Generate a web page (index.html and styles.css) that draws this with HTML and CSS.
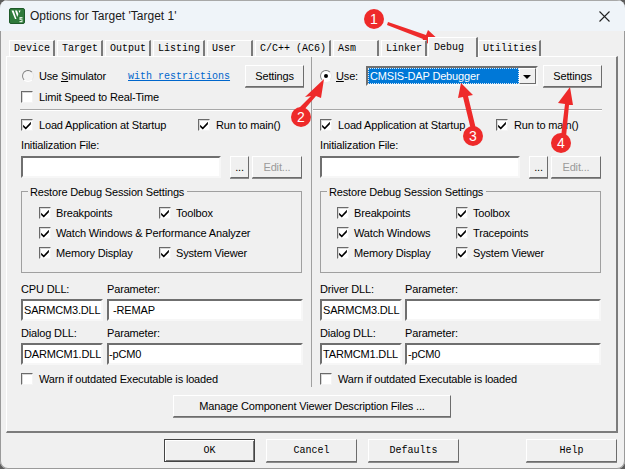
FILE: index.html
```html
<!DOCTYPE html>
<html lang="en">
<head>
<meta charset="utf-8">
<title>Options for Target 'Target 1'</title>
<link rel="stylesheet" href="styles.css">
</head>
<body>
<div class="window">
  <header class="titlebar">
    <svg class="appicon" width="16" height="16" viewBox="0 0 16 16">
      <rect x="0.5" y="0.5" width="15" height="15" rx="1.5" fill="#2f7a3b" stroke="#1e5a2a"/>
      <path d="M2.5 2.5 L6 11 L7.5 11 L4.6 2.5Z M6 2.5 L8.3 9 L9.4 6 L8 2.5Z M9.6 2.5 L10.4 5 L11.6 2.5Z" fill="#fff"/>
      <path d="M10.5 9h3v1.4h-2v.8h2v3h-3v-1.3h2v-.8h-2z" fill="#dfeee0"/>
    </svg>
    <span class="wintitle">Options for Target 'Target 1'</span>
    <svg class="closex" width="11" height="11" viewBox="0 0 11 11"><path d="M.5.5l10 10M10.5.5l-10 10" stroke="#222" stroke-width="1.1" fill="none"/></svg>
  </header>

  <nav class="tabs">
    <span class="tab w46">Device</span>
    <span class="tab w46">Target</span>
    <span class="tab w46">Output</span>
    <span class="tab w52">Listing</span>
    <span class="tab w46">User</span>
    <span class="tab w76">C/C++ (AC6)</span>
    <span class="tab w46">Asm</span>
    <span class="tab w46">Linker</span>
    <span class="tab active">Debug</span>
    <span class="tab w63">Utilities</span>
  </nav>

  <main class="panel">
    <div class="cols">
      <section class="col col-left">
        <div class="head">
          <div class="headrow">
            <span class="radio"></span>
            <span class="lbl simlbl">Use <u>S</u>imulator</span>
            <a class="link">with restrictions</a>
            <button class="btn settings">Settings</button>
          </div>
          <div class="headrow second">
            <span class="check"></span>
            <span class="lbl">Limit Speed to Real-Time</span>
          </div>
        </div>
        <div class="sep"></div>
        <div class="loadrow">
          <span class="opt"><span class="check on"><svg viewBox="0 0 9 9"><path d="M1 4.2l2.4 2.4L8 1.6v2.2L3.4 8.6 1 6.2z"/></svg></span><span class="lbl">Load Application at Startup</span></span>
          <span class="opt"><span class="check on"><svg viewBox="0 0 9 9"><path d="M1 4.2l2.4 2.4L8 1.6v2.2L3.4 8.6 1 6.2z"/></svg></span><span class="lbl">Run to main()</span></span>
        </div>
        <div class="caption">Initialization File:</div>
        <div class="filerow">
          <span class="field"></span>
          <button class="btn dots">...</button>
          <button class="btn edit">Edit...</button>
        </div>
        <div class="group">
          <span class="legend">Restore Debug Session Settings</span>
          <span class="opt"><span class="check on"><svg viewBox="0 0 9 9"><path d="M1 4.2l2.4 2.4L8 1.6v2.2L3.4 8.6 1 6.2z"/></svg></span><span class="lbl">Breakpoints</span></span>
          <span class="opt"><span class="check on"><svg viewBox="0 0 9 9"><path d="M1 4.2l2.4 2.4L8 1.6v2.2L3.4 8.6 1 6.2z"/></svg></span><span class="lbl">Toolbox</span></span>
          <span class="opt wide"><span class="check on"><svg viewBox="0 0 9 9"><path d="M1 4.2l2.4 2.4L8 1.6v2.2L3.4 8.6 1 6.2z"/></svg></span><span class="lbl">Watch Windows &amp; Performance Analyzer</span></span>
          <span class="opt"><span class="check on"><svg viewBox="0 0 9 9"><path d="M1 4.2l2.4 2.4L8 1.6v2.2L3.4 8.6 1 6.2z"/></svg></span><span class="lbl">Memory Display</span></span>
          <span class="opt"><span class="check on"><svg viewBox="0 0 9 9"><path d="M1 4.2l2.4 2.4L8 1.6v2.2L3.4 8.6 1 6.2z"/></svg></span><span class="lbl">System Viewer</span></span>
        </div>
        <div class="dllgrid">
          <span class="caption2">CPU DLL:</span><span class="caption2">Parameter:</span>
          <span class="field txt">SARMCM3.DLL</span><span class="field txt indent">-REMAP</span>
          <span class="caption2 next">Dialog DLL:</span><span class="caption2 next">Parameter:</span>
          <span class="field txt">DARMCM1.DLL</span><span class="field txt flush">-pCM0</span>
        </div>
        <div class="warnrow"><span class="check"></span><span class="lbl">Warn if outdated Executable is loaded</span></div>
      </section>

      <section class="col col-right">
        <div class="head">
          <div class="headrow">
            <span class="radio on"></span>
            <span class="lbl uselbl"><u>U</u>se:</span>
            <span class="combo"><span class="combotext"><span>CMSIS-DAP Debugger</span></span><span class="comboarrow"></span></span>
            <button class="btn settings">Settings</button>
          </div>
          <div class="headrow second"></div>
        </div>
        <div class="sep"></div>
        <div class="loadrow">
          <span class="opt"><span class="check on"><svg viewBox="0 0 9 9"><path d="M1 4.2l2.4 2.4L8 1.6v2.2L3.4 8.6 1 6.2z"/></svg></span><span class="lbl">Load Application at Startup</span></span>
          <span class="opt"><span class="check on"><svg viewBox="0 0 9 9"><path d="M1 4.2l2.4 2.4L8 1.6v2.2L3.4 8.6 1 6.2z"/></svg></span><span class="lbl">Run to main()</span></span>
        </div>
        <div class="caption">Initialization File:</div>
        <div class="filerow">
          <span class="field"></span>
          <button class="btn dots">...</button>
          <button class="btn edit">Edit...</button>
        </div>
        <div class="group">
          <span class="legend">Restore Debug Session Settings</span>
          <span class="opt"><span class="check on"><svg viewBox="0 0 9 9"><path d="M1 4.2l2.4 2.4L8 1.6v2.2L3.4 8.6 1 6.2z"/></svg></span><span class="lbl">Breakpoints</span></span>
          <span class="opt"><span class="check on"><svg viewBox="0 0 9 9"><path d="M1 4.2l2.4 2.4L8 1.6v2.2L3.4 8.6 1 6.2z"/></svg></span><span class="lbl">Toolbox</span></span>
          <span class="opt"><span class="check on"><svg viewBox="0 0 9 9"><path d="M1 4.2l2.4 2.4L8 1.6v2.2L3.4 8.6 1 6.2z"/></svg></span><span class="lbl">Watch Windows</span></span>
          <span class="opt"><span class="check on"><svg viewBox="0 0 9 9"><path d="M1 4.2l2.4 2.4L8 1.6v2.2L3.4 8.6 1 6.2z"/></svg></span><span class="lbl">Tracepoints</span></span>
          <span class="opt"><span class="check on"><svg viewBox="0 0 9 9"><path d="M1 4.2l2.4 2.4L8 1.6v2.2L3.4 8.6 1 6.2z"/></svg></span><span class="lbl">Memory Display</span></span>
          <span class="opt"><span class="check on"><svg viewBox="0 0 9 9"><path d="M1 4.2l2.4 2.4L8 1.6v2.2L3.4 8.6 1 6.2z"/></svg></span><span class="lbl">System Viewer</span></span>
        </div>
        <div class="dllgrid">
          <span class="caption2">Driver DLL:</span><span class="caption2">Parameter:</span>
          <span class="field txt">SARMCM3.DLL</span><span class="field txt"></span>
          <span class="caption2 next">Dialog DLL:</span><span class="caption2 next">Parameter:</span>
          <span class="field txt">TARMCM1.DLL</span><span class="field txt">-pCM0</span>
        </div>
        <div class="warnrow"><span class="check"></span><span class="lbl">Warn if outdated Executable is loaded</span></div>
      </section>
    </div>
    <div class="managerow"><button class="btn manage">Manage Component Viewer Description Files ...</button></div>
  </main>

  <footer class="footer">
    <button class="btn foot default">OK</button>
    <button class="btn foot">Cancel</button>
    <button class="btn foot">Defaults</button>
    <button class="btn foot help">Help</button>
  </footer>

  <svg class="notes" width="625" height="469" viewBox="0 0 625 469">
    <g fill="#ee2a2a">
      <path d="M388 22 L426 35 L428 30 L441 42 L421 44 L423 39 L387 25Z"/>
      <path d="M299 108 L311 96 L305 97 L324 79 L321 98 L316 96 L303 111Z"/>
      <path d="M471 130 L463 97 L458 98 L461 83 L473 95 L468 96 L476 129Z"/>
      <path d="M561 137 L565 104 L558 103 L570 87 L573 105 L569 105 L566 137Z"/>
      <circle cx="374" cy="19" r="10"/>
      <circle cx="301" cy="117" r="10"/>
      <circle cx="473" cy="136" r="10"/>
      <circle cx="561" cy="143" r="10"/>
    </g>
    <g class="notenum">
      <text x="374" y="24">1</text>
      <text x="301" y="122">2</text>
      <text x="473" y="141">3</text>
      <text x="561" y="148">4</text>
    </g>
  </svg>
</div>
</body>
</html>
```

FILE: styles.css
```css
* { box-sizing: border-box; }
html, body { margin: 0; padding: 0; background: #5e5e5e; }
body { width: 625px; height: 469px; overflow: hidden; font-family: "Liberation Sans", Arial, sans-serif; font-size: 11px; letter-spacing: -0.16px; color: #000; }
u { text-decoration: underline; }

.window { position: relative; width: 625px; height: 469px; background: #f0f0f0; border-radius: 8px; overflow: hidden; box-shadow: inset 0 0 0 1px #9a9a9a; }
.titlebar { height: 31px; background: #eff4f9; display: flex; align-items: center; padding: 0 15px 0 9px; border-top: 1px solid #a8a8a8; }
.appicon { flex: none; }
.wintitle { margin-left: 5px; font-size: 12px; letter-spacing: 0; color: #1a1a1a; flex: 1; }

.tabs { display: flex; gap: 2px; height: 25px; padding: 9px 0 0 9px; align-items: flex-end; position: relative; z-index: 1; }
.tab { height: 16px; flex: none; padding-left: 4px; font-family: "Liberation Mono", monospace; font-size: 10px; letter-spacing: 0; line-height: 15px; color: #000; background: #f0f0f0; border-top: 1px solid #fff; border-left: 1px solid #fff; border-right: 2px solid #7a7a7a; }
.w46 { width: 46px; }
.w52 { width: 52px; }
.w63 { width: 63px; }
.w76 { width: 76px; }
.tab.active { width: 50px; height: 20px; margin: 0 -2px 0 -1px; padding: 2px 0 0 5px; line-height: 15px; transform: translateY(1px); }

.panel { height: 377px; margin-left: 6px; width: 612px; border: 1px solid #fff; border-right: 2px solid #7c7c7c; border-bottom: 2px solid #7c7c7c; }
.cols { display: flex; height: 330px; }
.col { display: flex; flex-direction: column; }
.col-left { width: 305px; padding: 8px 0 0 14px; border-right: 1px solid #a0a0a0; --c2: 120px; --rm: 177px; }
.col-right { width: 304px; padding: 8px 0 0 8px; --c2: 119px; --rm: 176px; }

.head { height: 44px; }
.headrow { display: flex; align-items: center; height: 22px; }
.headrow.second { margin-top: -1px; }
.lbl { white-space: nowrap; }
.radio { width: 12px; height: 12px; flex: none; border-radius: 50%; background: #fff; border: 1px solid; border-color: #777 #e8e8e8 #fff #888; margin: 0 4px 0 0; position: relative; }
.col-left .radio { margin: 0 5px 0 1px; background: #f4f4f4; }
.radio.on::after { content: ""; position: absolute; left: 3px; top: 3px; width: 4px; height: 4px; border-radius: 50%; background: #000; }
.simlbl { width: 89px; flex: none; }
.uselbl { width: 30px; flex: none; }
.link { font-family: "Liberation Mono", monospace; font-size: 10px; letter-spacing: 0; color: #0066cc; text-decoration: underline; width: 117px; flex: none; }
.check { display: inline-flex; align-items: center; justify-content: center; width: 12px; height: 12px; flex: none; background: #fff; border: 1px solid; border-color: #6a6a6a #f4f4f4 #f4f4f4 #6a6a6a; box-shadow: inset 1px 1px 0 #d8d8d8; }
.check svg { width: 10px; height: 10px; fill: #000; }
.headrow .check { margin-right: 6px; }

.btn { font: inherit; letter-spacing: inherit; color: #000; background: #f0f0f0; border: 1px solid; border-color: #fff #6c6c6c #6c6c6c #fff; box-shadow: 0 1px 0 #8a8a8a; padding: 0; border-radius: 0; }
.settings { width: 59px; height: 22px; flex: none; }

.sep { width: 284px; height: 2px; margin-left: -1px; border-top: 1px solid #a8a8a8; border-bottom: 1px solid #fff; }
.col-right .sep { width: 289px; margin-left: -7px; }

.loadrow { display: flex; height: 14px; margin-top: 7px; }
.opt { display: inline-flex; align-items: center; gap: 6px; white-space: nowrap; }
.loadrow .opt:first-child { width: var(--rm); }
.caption { height: 14px; line-height: 14px; margin-top: 6px; }
.filerow { display: flex; margin-top: 4px; height: 22px; }
.field { display: block; background: #fff; border: 2px solid; border-color: #6f6f6f #f7f7f7 #f7f7f7 #6f6f6f; height: 22px; }
.filerow .field { width: 200px; }
.dots { width: 19px; height: 22px; margin-left: 9px; }
.edit { width: 50px; height: 22px; margin-left: 3px; color: #9a9a9a; }

.group { position: relative; width: 281px; height: 82px; margin-top: 13px; border: 1px solid #a0a0a0; display: grid; grid-template-columns: var(--c2) 1fr; grid-auto-rows: 20px; align-items: center; padding: 11px 0 0 17px; }
.col-right .group { padding-left: 16px; }
.legend { position: absolute; left: 6px; top: -7px; padding: 0 3px 0 2px; background: #f0f0f0; line-height: 14px; }
.group .opt { gap: 5px; }
.wide { grid-column: 1 / -1; }

.dllgrid { display: grid; width: 282px; grid-template-columns: 82px 1fr; column-gap: 4px; margin-top: 9px; }
.col-right .dllgrid { width: 281px; column-gap: 3px; }
.caption2 { height: 14px; line-height: 14px; margin-bottom: 3px; }
.caption2.next { margin-top: 5px; margin-bottom: 3px; }
.field.txt { padding-left: 1px; line-height: 18px; white-space: nowrap; overflow: hidden; height: 22px; }
.field.txt.indent { padding-left: 4px; }
.field.txt.flush { padding-left: 0; }

.warnrow { display: flex; align-items: center; gap: 6px; height: 14px; margin-top: 7px; }

.combo { display: flex; width: 172px; height: 20px; margin-right: 5px; flex: none; border: 2px solid; border-color: #6f6f6f #f7f7f7 #f7f7f7 #6f6f6f; background: #fff; }
.combotext { flex: 1; background: #0078d7; color: #fff; border: 1px dotted #dbe8f5; line-height: 15px; padding-left: 1px; }
.comboarrow { width: 17px; background: #f0f0f0; border: 1px solid; border-color: #fff #6c6c6c #6c6c6c #fff; position: relative; flex: none; }
.comboarrow::after { content: ""; position: absolute; left: 3px; top: 6px; border: 4px solid transparent; border-top: 4px solid #000; border-bottom: 0; }

.managerow { display: flex; padding-left: 166px; margin-top: 8px; }
.manage { width: 278px; height: 22px; }

.footer { display: flex; gap: 11px; padding: 6px 0 0 164px; }
.foot { width: 91px; height: 23px; font-family: "Liberation Mono", monospace; font-size: 10px; letter-spacing: 0; }
.foot.default { border: 1px solid #444; box-shadow: inset 1px 1px 0 #fff, inset -1px -1px 0 #777; }
.foot.help { margin-left: 56px; }

.notes { position: absolute; left: 0; top: 0; pointer-events: none; }
.notenum { font-family: "Liberation Sans", Arial, sans-serif; font-size: 14px; letter-spacing: 0; fill: #fff; text-anchor: middle; }
```
